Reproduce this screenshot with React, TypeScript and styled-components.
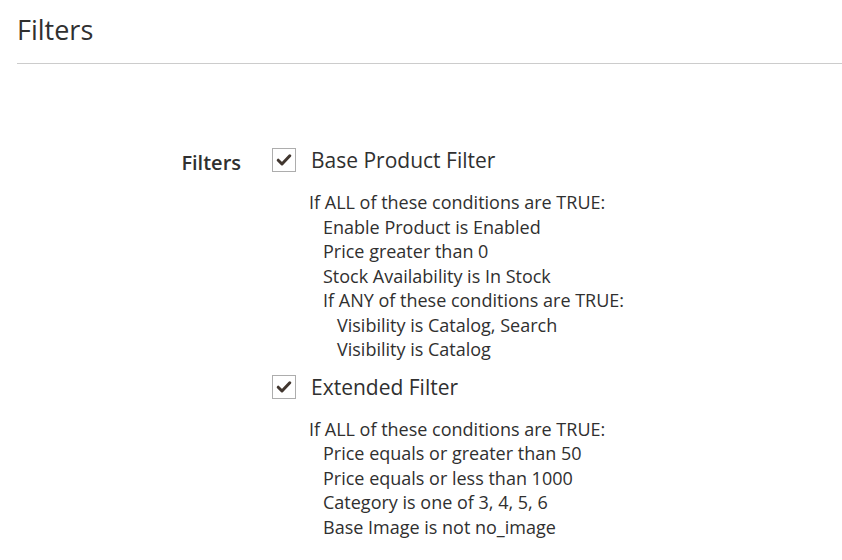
import React from 'react'
import styled, { createGlobalStyle } from 'styled-components'

const GlobalStyle = createGlobalStyle`
  html, body {
    margin: 0;
    padding: 0;
    background: #ffffff;
  }
  body {
    font-family: "Open Sans", "Liberation Sans", sans-serif;
    color: #303030;
  }
`

const Page = styled.div`
  padding: 0 0 0 17px;
  width: 842px;
  box-sizing: border-box;
`

const Title = styled.h2`
  margin: 0;
  padding: 12px 0 15px;
  font-size: 27px;
  font-weight: 400;
  line-height: 36px;
  color: #303030;
  border-bottom: 1px solid #cccccc;
`

const FieldRow = styled.div`
  display: flex;
  align-items: flex-start;
  padding-top: 82px;
`

const FieldLabel = styled.div`
  width: 272px;
  padding-right: 31px;
  box-sizing: border-box;
  text-align: right;
  margin-left: -17px;
  font-size: 20px;
  font-weight: 600;
  line-height: 30px;
  color: #303030;
  padding-top: 2px;
`

const Options = styled.div`
  display: flex;
  flex-direction: column;
`

const Option = styled.div`
  display: flex;
  flex-direction: column;
`

const CheckRow = styled.label`
  display: flex;
  align-items: center;
  gap: 15px;
  height: 28px;
`

const Box = styled.span`
  width: 24px;
  height: 24px;
  box-sizing: border-box;
  border: 1px solid #adadad;
  background: #ffffff;
  display: flex;
  align-items: center;
  justify-content: center;
  color: #41362f;
`

const CheckText = styled.span`
  font-size: 21px;
  line-height: 28px;
  color: #303030;
`

const Conditions = styled.div`
  padding: 16px 0 11px 37px;
`

const Line = styled.div<{ $level: number }>`
  padding-left: ${(p) => p.$level * 14}px;
  font-size: 18px;
  line-height: 24.5px;
  color: #303030;
  white-space: nowrap;
`

const Check = () => (
  <svg width="16" height="14" viewBox="0 0 16 14">
    <path
      d="M2.2 7.2 L6 11 L13.8 2.8"
      fill="none"
      stroke="currentColor"
      strokeWidth="3"
      strokeLinecap="round"
      strokeLinejoin="round"
    />
  </svg>
)

const filters = [
  {
    name: 'Base Product Filter',
    lines: [
      { level: 0, text: 'If ALL of these conditions are TRUE:' },
      { level: 1, text: 'Enable Product is Enabled' },
      { level: 1, text: 'Price greater than 0' },
      { level: 1, text: 'Stock Availability is In Stock' },
      { level: 1, text: 'If ANY of these conditions are TRUE:' },
      { level: 2, text: 'Visibility is Catalog, Search' },
      { level: 2, text: 'Visibility is Catalog' },
    ],
  },
  {
    name: 'Extended Filter',
    lines: [
      { level: 0, text: 'If ALL of these conditions are TRUE:' },
      { level: 1, text: 'Price equals or greater than 50' },
      { level: 1, text: 'Price equals or less than 1000' },
      { level: 1, text: 'Category is one of 3, 4, 5, 6' },
      { level: 1, text: 'Base Image is not no_image' },
    ],
  },
]

export default function App() {
  return (
    <>
      <GlobalStyle />
      <Page>
        <Title>Filters</Title>
        <FieldRow>
          <FieldLabel>Filters</FieldLabel>
          <Options>
            {filters.map((f) => (
              <Option key={f.name}>
                <CheckRow>
                  <Box>
                    <Check />
                  </Box>
                  <CheckText>{f.name}</CheckText>
                </CheckRow>
                <Conditions>
                  {f.lines.map((l, i) => (
                    <Line key={i} $level={l.level}>
                      {l.text}
                    </Line>
                  ))}
                </Conditions>
              </Option>
            ))}
          </Options>
        </FieldRow>
      </Page>
    </>
  )
}
